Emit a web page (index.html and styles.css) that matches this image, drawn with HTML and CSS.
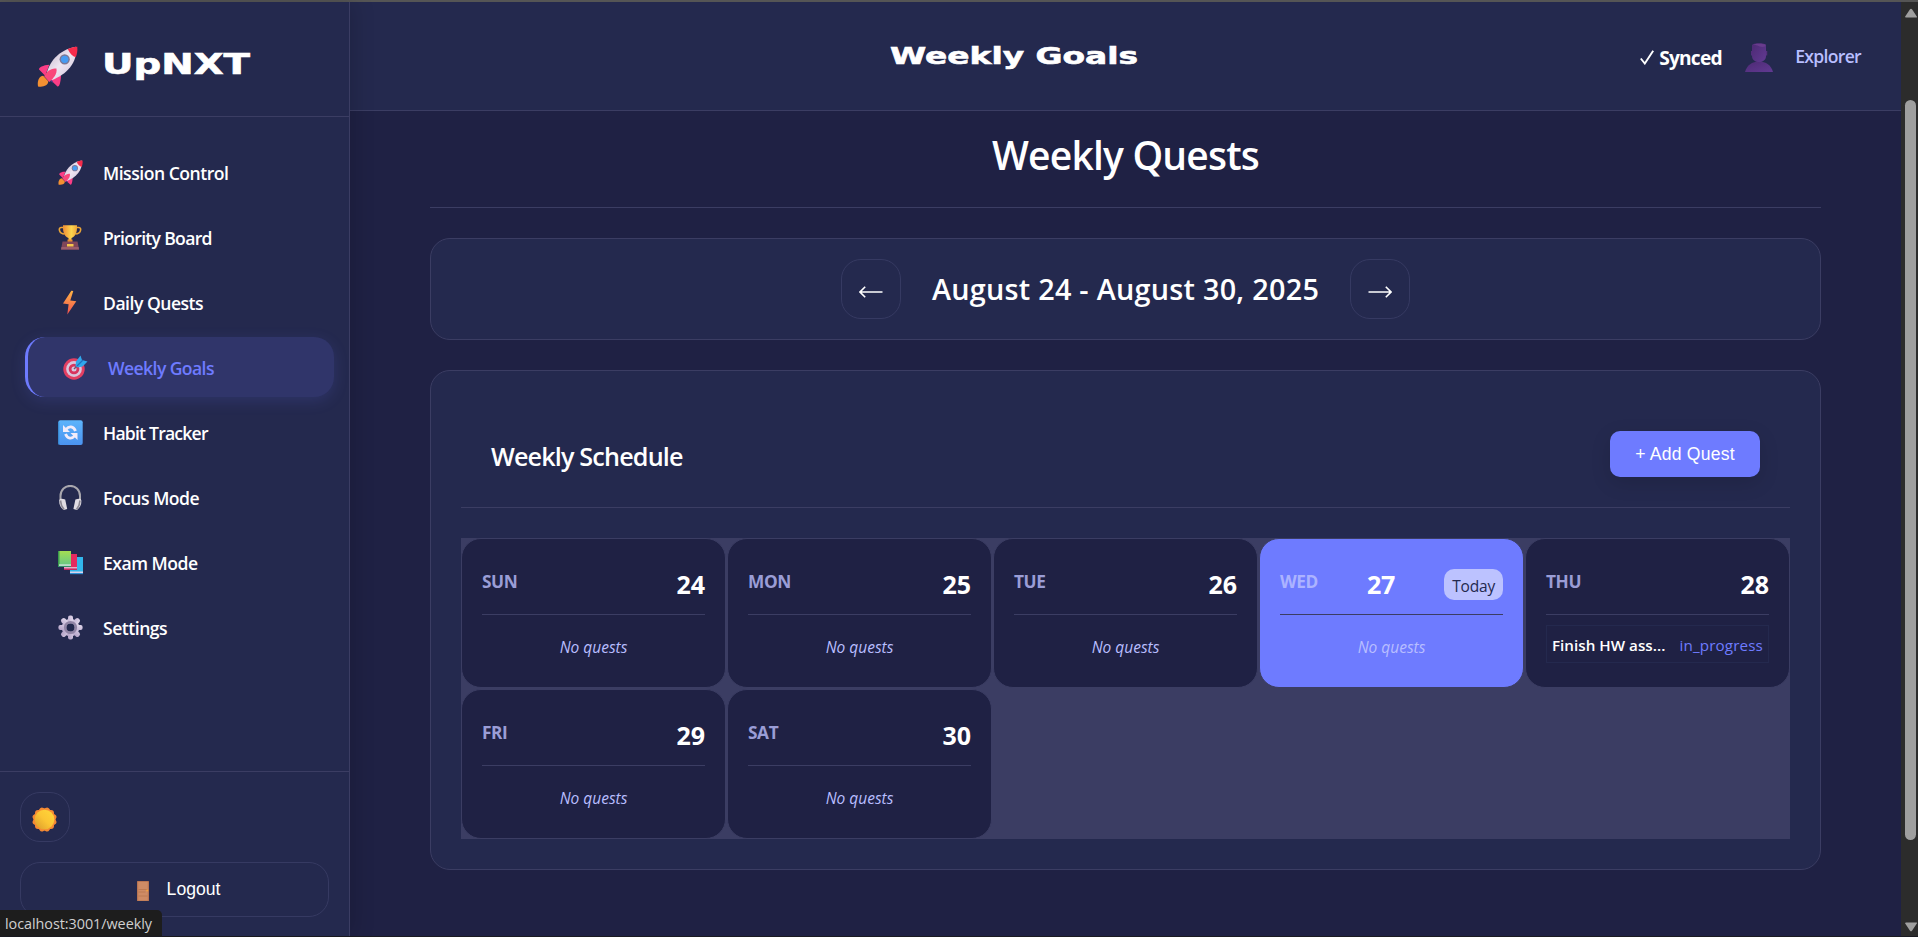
FILE: index.html
```html
<!DOCTYPE html>
<html lang="en">
<head>
<meta charset="utf-8">
<title>UpNXT</title>
<link rel="stylesheet" href="styles.css">
</head>
<body>
<svg class="defs" width="0" height="0" aria-hidden="true">
  <defs>
    <linearGradient id="hull" x1="0" y1="0" x2="1" y2="1"><stop offset="0" stop-color="#bcaec4"/><stop offset=".5" stop-color="#eee6f2"/><stop offset="1" stop-color="#cfc2d8"/></linearGradient>
    <linearGradient id="gold" x1="0" y1="0" x2="1" y2="0"><stop offset="0" stop-color="#f08c35"/><stop offset=".6" stop-color="#fcd64e"/><stop offset="1" stop-color="#f0a63a"/></linearGradient>
    <linearGradient id="bolt" x1="0" y1="0" x2="0" y2="1"><stop offset="0" stop-color="#ffb545"/><stop offset="1" stop-color="#f2504f"/></linearGradient>
    <linearGradient id="blue" x1="0" y1="0" x2="0" y2="1"><stop offset="0" stop-color="#5db4fb"/><stop offset="1" stop-color="#4b93f0"/></linearGradient>
    <linearGradient id="green" x1="0" y1="0" x2="0" y2="1"><stop offset="0" stop-color="#a5dd52"/><stop offset="1" stop-color="#5fc58a"/></linearGradient>
    <linearGradient id="steel" x1="1" y1="0" x2="0" y2="1"><stop offset="0" stop-color="#e2d8ec"/><stop offset="1" stop-color="#b3a1c6"/></linearGradient>
    <linearGradient id="sunface" x1="1" y1="0" x2="0" y2="1"><stop offset="0" stop-color="#ffd83b"/><stop offset=".5" stop-color="#fbc534"/><stop offset="1" stop-color="#d99a2c"/></linearGradient>
    <linearGradient id="bust" x1="0" y1="0" x2="1" y2="1"><stop offset="0" stop-color="#4d2a74"/><stop offset="1" stop-color="#613a92"/></linearGradient>
    <symbol id="rocket" viewBox="0 0 40 40">
      <path d="M1 39.500C0 34 2 29.500 6 29l5 5.500c0 4-5 6-10 5z" fill="#f39032"/>
      <path d="M8 29l-6-6c-.6-2 4-4.500 10-4.800zM13 33l7 6.500c2 .5 3-4 3.500-11z" fill="#fb3d86"/>
      <path d="M9 30l3 4 4 2-4-8z" fill="#4a3c8c"/>
      <path d="M9 29C11 17 20 4 38 .8 40 16 29 28 14 33.500z" fill="url(#hull)"/>
      <path d="M30 3C33 1.500 36 .5 39.300.7c.4 4-.3 7.300-1.500 10.300-3-1-6-3.500-7.800-8z" fill="#f62b4b"/>
      <path d="M7 29.500C9 25 14 21 19 22c1 5-3 10-7 13z" fill="#f9487b"/>
      <circle cx="27" cy="13" r="5" fill="#7c7896"/><circle cx="27" cy="13" r="3.600" fill="#479bf2"/>
    </symbol>
    <symbol id="trophy" viewBox="0.500 0 25 25">
      <path d="M6 2.500H3.500C.5 2.500 1.500 9 7 9M19 2.500h2.500c3 0 2 6.500-3.500 6.500" fill="none" stroke="#e9a437" stroke-width="1.600"/>
      <path d="M5.500.3h14C20 9 17 12 14 13v3.500h-3V13C8 12 5 9 5.500.3z" fill="url(#gold)"/>
      <path d="M10 14.500h5v2.500h-5z" fill="#e98c32"/>
      <path d="M5 16.500h15l1.500 8h-18z" fill="#804659"/><path d="M4 22h17.100l.4 2.500h-18z" fill="#9b5d6c"/>
      <rect x="9.500" y="19" width="6.500" height="2.500" fill="#f5c64d"/>
    </symbol>
    <symbol id="zap" viewBox="0.700 0 25 25"><path d="M14 .7L5.700 13.500l5.600.8L10 24.500l9-13.300-6-.6L16 1z" fill="url(#bolt)"/></symbol>
    <symbol id="target" viewBox="0 0 25 25">
      <circle cx="11" cy="14" r="10.700" fill="#e33f62"/><circle cx="11" cy="14" r="7.900" fill="#d8c5dc"/><circle cx="11" cy="14" r="5.300" fill="#d8345e"/><circle cx="11" cy="14" r="2.500" fill="#d6c9df"/>
      <path d="M11 14l3-3" stroke="#6d5278" stroke-width="1.500"/>
      <path d="M12.500 11L13 6.500 17.500.5l1.500 4.500 5.500 1.500-5 5-4.500 1z" fill="#2fa8ec"/><path d="M14 11l6-6" stroke="#2370bd" stroke-width="1.200"/>
    </symbol>
    <symbol id="cycle" viewBox="0 0 25 25">
      <rect x=".3" y=".3" width="24.400" height="24.700" rx="2" fill="url(#blue)"/><path d="M.8 2v22.500" stroke="#358fd6" stroke-width="1"/>
      <path d="M8 9.500C11 5.700 15.500 6 17.500 11M17 15.500c-3 3.800-7.500 3.500-9.500-1.500" fill="none" stroke="#f2ecfa" stroke-width="2.800"/>
      <path d="M5 5v7h7zM19.500 20v-7h-7z" fill="#f2ecfa"/>
    </symbol>
    <symbol id="phones" viewBox="0 0 25 25">
      <path d="M2.500 16V11C2.500-2.500 22-2.500 22 11v5" fill="none" stroke="#a9a7ae" stroke-width="2"/>
      <path d="M1.200 16c0-3 3-2.500 6-1.500l2 9.500-3.500 1C3 23 1 20 1.200 16zM23.400 16c0-3-3-2.500-6-1.500l-2 9.500 3.500 1c2.700-2 4.700-5 4.500-9z" fill="#e0dce3"/>
      <path d="M2.500 15.500l1 5 2.500 4M22 15.500l-1 5-2.500 4" stroke="#8b8792" stroke-width="1.600" fill="none"/>
    </symbol>
    <symbol id="books" viewBox="0 0 25 25">
      <path d="M12 7h13v17H12z" fill="#32b7ec"/><path d="M12 21.500h13v1.700H12z" fill="#d8d3ee"/><path d="M12 23.200h13v1H12z" fill="#2685d0"/>
      <path d="M6 4h13v16H6z" fill="#e52a5f"/><path d="M6 17.200h13v1.400H6z" fill="#e6cfe2"/><path d="M6 18.600h13v1.200H6z" fill="#bd2a65"/>
      <path d="M0 1h13v16H0z" fill="url(#green)"/><path d="M0 1h1.500v15H0z" fill="#3b9b4d"/><path d="M1 14.400h12v1.500H1z" fill="#d3e7dd"/><path d="M0 15.900h13v1.100H0z" fill="#348f69"/>
    </symbol>
    <symbol id="gear" viewBox="0 0 25 25">
      <g fill="url(#steel)"><circle cx="12.500" cy="12.500" r="8.800"/>
      <rect x="10" y=".4" width="5" height="24.200" rx="2"/><rect x=".4" y="10" width="24.200" height="5" rx="2"/>
      <rect x="10" y=".4" width="5" height="24.200" rx="2" transform="rotate(45 12.500 12.500)"/><rect x="10" y=".4" width="5" height="24.200" rx="2" transform="rotate(-45 12.500 12.500)"/></g>
      <circle cx="12.500" cy="12.500" r="5.400" fill="none" stroke="#9184a5" stroke-width="2.400"/><circle cx="12.500" cy="12.500" r="4" fill="#24294e"/>
    </symbol>
    <symbol id="sun" viewBox="0 0 25 25">
      <g fill="#f58a33"><rect x="3" y="3" width="19" height="19" rx="3"/><rect x="3" y="3" width="19" height="19" rx="3" transform="rotate(30 12.500 12.500)"/><rect x="3" y="3" width="19" height="19" rx="3" transform="rotate(60 12.500 12.500)"/></g>
      <circle cx="12.500" cy="12.500" r="9.800" fill="url(#sunface)"/>
    </symbol>
    <symbol id="door" viewBox="0 0 12 20">
      <rect width="12" height="20" rx=".6" fill="#b87452"/><rect x="1.200" y="1" width="9.600" height="18.500" fill="#ce8b65"/>
      <path d="M1.500 8.500h9M1.500 11h7M1.500 15h9" stroke="#b9764f" stroke-width=".8"/><circle cx="10.200" cy="9.600" r="1" fill="#f5a23a"/>
    </symbol>
    <symbol id="person" viewBox="0 0 28 29">
      <path d="M0 29C2 22 7 18.500 14 18.500S26 22 28 29z" fill="url(#bust)"/>
      <path d="M7 2C8-.3 20-.3 21 2v11c0 8-14 8-14 0z" fill="url(#bust)"/>
      <path d="M6.700 8v4.500M21.600 8v4.500" stroke="#55307e" stroke-width="1.300"/><path d="M8 1.500c3-1 9-1 12.500 0l-.5 2c-3 1-6 0-7.500-1z" fill="#693c8d"/>
    </symbol>
  </defs>
</svg>

<div class="app">
  <aside class="sidebar">
    <div class="brand">
      <svg class="brand-icon"><use href="#rocket"/></svg>
      <svg class="brand-name" viewBox="0 0 160 44"><text x="2" y="30" textLength="148" lengthAdjust="spacingAndGlyphs">UpNXT</text></svg>
    </div>
    <nav class="menu">
      <a class="item"><svg class="icon"><use href="#rocket"/></svg><span>Mission Control</span></a>
      <a class="item"><svg class="icon"><use href="#trophy"/></svg><span class="snug">Priority Board</span></a>
      <a class="item"><svg class="icon"><use href="#zap"/></svg><span>Daily Quests</span></a>
      <a class="item active"><svg class="icon"><use href="#target"/></svg><span>Weekly Goals</span></a>
      <a class="item"><svg class="icon"><use href="#cycle"/></svg><span class="tight">Habit Tracker</span></a>
      <a class="item"><svg class="icon"><use href="#phones"/></svg><span>Focus Mode</span></a>
      <a class="item"><svg class="icon"><use href="#books"/></svg><span>Exam Mode</span></a>
      <a class="item"><svg class="icon"><use href="#gear"/></svg><span>Settings</span></a>
    </nav>
    <div class="side-foot">
      <button class="theme"><svg class="icon"><use href="#sun"/></svg></button>
      <button class="logout"><svg class="door"><use href="#door"/></svg><span>Logout</span></button>
    </div>
  </aside>

  <div class="main">
    <header class="topbar">
      <svg class="page-name" viewBox="0 0 260 40"><text x="6" y="26" textLength="248" lengthAdjust="spacingAndGlyphs">Weekly Goals</text></svg>
      <div class="user">
        <svg class="check" viewBox="0 0 14 15"><path d="M.8 8.500l4 5L13.200.8" fill="none" stroke="#fff" stroke-width="1.900"/></svg>
        <span class="synced">Synced</span>
        <svg class="avatar"><use href="#person"/></svg>
        <span class="name">Explorer</span>
      </div>
    </header>
    <main class="content">
      <h1>Weekly Quests</h1>
      <section class="week-nav">
        <button class="arrow"><svg viewBox="0 0 24 12"><path d="M23.500 6H1M6.200.8L1 6l5.200 5.200"/></svg></button>
        <h2>August 24 - August 30, 2025</h2>
        <button class="arrow"><svg viewBox="0 0 24 12"><path d="M.5 6H23M17.800.8L23 6l-5.200 5.200"/></svg></button>
      </section>
      <section class="schedule">
        <div class="sched-head"><h3>Weekly Schedule</h3><button class="add">+ Add Quest</button></div>
        <div class="grid">
          <article class="day"><div class="day-head"><span class="dow">SUN</span><b>24</b></div><p>No quests</p></article>
          <article class="day"><div class="day-head"><span class="dow">MON</span><b>25</b></div><p>No quests</p></article>
          <article class="day"><div class="day-head"><span class="dow">TUE</span><b>26</b></div><p>No quests</p></article>
          <article class="day today"><div class="day-head"><span class="dow">WED</span><b>27</b><span class="badge">Today</span></div><p>No quests</p></article>
          <article class="day"><div class="day-head"><span class="dow">THU</span><b>28</b></div><div class="task"><span class="task-name">Finish HW ass...</span><span class="status">in_progress</span></div></article>
          <article class="day"><div class="day-head"><span class="dow">FRI</span><b>29</b></div><p>No quests</p></article>
          <article class="day"><div class="day-head"><span class="dow">SAT</span><b>30</b></div><p>No quests</p></article>
        </div>
      </section>
    </main>
  </div>

  <div class="scrollbar">
    <svg class="cap" viewBox="0 0 12 10"><path d="M1 9.500h10.500q1 0 .3-1L7 1.200q-1-1-2 0L.2 8.500q-.6 1 .8 1z"/></svg>
    <div class="thumb"></div>
    <svg class="cap" viewBox="0 0 12 10"><path d="M1 .5h10.500q1 0 .3 1L7 8.800q-1 1-2 0L.2 1.500q-.6-1 .8-1z"/></svg>
  </div>
</div>
<div class="link-status">localhost:3001/weekly</div>
</body>
</html>
```

FILE: styles.css
```css
* { box-sizing: border-box; }
body {
  margin: 0;
  width: 1918px;
  height: 937px;
  overflow: hidden;
  background: #1f2144;
  color: #fff;
  font-family: "Open Sans", "Noto Sans", sans-serif;
}
.defs { position: absolute; }
h1, h2, h3, p { margin: 0; font-weight: 600; }
button { padding: 0; margin: 0; background: none; color: #fff; font-family: "Liberation Sans", Arial, sans-serif; }
.app { display: flex; height: 937px; border-top: 2px solid #555; border-bottom: 1px solid #1b1b22; }

.sidebar {
  display: flex;
  flex-direction: column;
  flex: none;
  width: 350px;
  background: #24294e;
  border-right: 1px solid #3b3d63;
  box-shadow: 4px 0 20px rgba(0, 0, 0, .15);
  z-index: 1;
}
.brand { display: flex; align-items: center; gap: 22px; height: 115px; padding: 14px 0 0 37px; border-bottom: 1px solid #3b3d63; }
.brand-icon { width: 41px; height: 41px; }
.brand-name { width: 160px; height: 44px; }
.brand-name text, .page-name text { fill: #fff; stroke: #fff; stroke-width: .6; font-family: "DejaVu Sans", sans-serif; font-weight: 700; }
.brand-name text { font-size: 28px; }
.menu { display: flex; flex-direction: column; gap: 5px; padding: 25px 15px 0 25px; flex: 1; }
.item {
  display: flex;
  align-items: center;
  gap: 20px;
  height: 60px;
  padding: 1px 0 0 33px;
  border-radius: 20px;
  font-size: 17.600px;
  font-weight: 600;
  letter-spacing: -.5px;
  white-space: nowrap;
}
.item .snug { letter-spacing: -.7px; }
.item .tight { letter-spacing: -.8px; }
.icon { width: 25px; height: 25px; flex: none; }
.item.active {
  background: #30356a;
  color: #6e7bff;
  border-left: 3px solid #6e7bff;
  padding-left: 35px;
  letter-spacing: -.6px;
  box-shadow: 0 4px 15px rgba(110, 123, 255, .15);
}
.side-foot { display: flex; flex-direction: column; gap: 20px; height: 165px; padding: 20px 20px 0; border-top: 1px solid #3b3d63; }
.theme { display: flex; align-items: center; justify-content: center; width: 50px; height: 50px; padding: 4px 1px 0 0; border: 1px solid #363a62; border-radius: 20px; }
.logout { display: flex; align-items: center; justify-content: center; gap: 18px; height: 55px; border: 1px solid #363a62; border-radius: 20px; font-size: 17.600px; padding-left: 8px; }
.door { width: 12px; height: 20px; position: relative; top: 1px; }

.main { flex: 1; display: flex; flex-direction: column; min-width: 0; }
.topbar { display: flex; justify-content: space-between; height: 109px; padding: 0 40px 0 534px; background: #24294e; border-bottom: 1px solid #3b3d63; }
.page-name { width: 260px; height: 40px; margin-top: 36px; }
.page-name text { font-size: 23px; }
.user { display: flex; align-items: center; height: 110px; }
.check { width: 14px; height: 15px; margin-right: 5px; }
.synced { font-size: 19.200px; font-weight: 700; letter-spacing: -.8px; width: 65px; white-space: nowrap; }
.avatar { width: 28px; height: 29px; margin: 0 22px 0 21px; }
.name { font-size: 17.600px; font-weight: 600; color: #b8beff; letter-spacing: -.7px; position: relative; top: -1px; }

.content { padding: 0 80px; }
h1 { height: 97px; padding-top: 17px; border-bottom: 1px solid #3b3d63; font-size: 39px; line-height: 54px; letter-spacing: -.8px; text-align: center; }
.week-nav { display: flex; align-items: center; justify-content: center; gap: 30px; height: 102px; margin-top: 30px; background: #24294e; border: 1px solid #3b3d63; border-radius: 20px; }
h2 { width: 389px; padding-bottom: 2px; font-size: 28.800px; text-align: center; white-space: nowrap; letter-spacing: .26px; }
.arrow { display: flex; align-items: center; justify-content: center; width: 60px; height: 60px; padding-top: 5px; border: 1px solid #363a62; border-radius: 20px; }
.arrow svg { width: 24px; height: 12px; fill: none; stroke: #fff; stroke-width: 1.600; }
.schedule { height: 500px; margin-top: 30px; padding: 30px; background: #24294e; border: 1px solid #3b3d63; border-radius: 20px; }
.sched-head { display: flex; justify-content: space-between; align-items: flex-start; height: 107px; padding: 30px 30px 0; border-bottom: 1px solid #3b3d63; }
h3 { font-size: 25.200px; line-height: 50px; letter-spacing: -.85px; }
.add { width: 150px; height: 46px; background: #6e7bff; border: 0; border-radius: 10px; font-size: 17.600px; letter-spacing: .2px; box-shadow: 0 6px 20px rgba(0, 0, 0, .13); }
.grid { display: grid; grid-template-columns: repeat(5, 265px); grid-auto-rows: 150px; gap: 1px; margin-top: 30px; background: #3b3d63; }
.day { padding: 20px; background: #1f2144; border: 1px solid #3b3d63; border-radius: 20px; }
.day-head { display: flex; justify-content: space-between; align-items: center; height: 56px; padding-bottom: 4px; border-bottom: 1px solid #3b3d63; margin-bottom: 10px; }
.dow { font-size: 17.300px; font-weight: 700; color: #9a9dd6; letter-spacing: -.4px; position: relative; top: -3px; }
.day b { font-size: 25px; letter-spacing: -.1px; position: relative; top: -1px; }
.day p { font-size: 15.500px; font-style: italic; font-weight: 400; color: #b8beff; text-align: center; line-height: 44px; }
.today { background: #6e7bff; }
.today .dow { color: #acb3ff; }
.badge { height: 31px; line-height: 34px; padding: 0 8px; background: #bcc2ff; border-radius: 10px; color: #24294e; font-size: 15.500px; font-weight: 500; letter-spacing: -.2px; }
.task { display: flex; justify-content: space-between; align-items: center; height: 38px; margin-top: 10px; padding: 1px 5px 0; border: 1px solid #24294e; font-size: 15.200px; white-space: nowrap; }
.task-name { font-weight: 600; letter-spacing: .02px; }
.status { color: #6e7bff; letter-spacing: .15px; font-weight: 500; }

.scrollbar { display: flex; flex-direction: column; align-items: center; width: 17px; background: #2c2c2c; padding: 6px 0 4px 2px; }
.cap { width: 12px; height: 10px; fill: #9f9f9f; flex: none; }
.thumb { width: 11px; height: 740px; margin: 82px 0 auto; background: #9f9f9f; border-radius: 6px; }
.link-status { position: absolute; z-index: 2; left: 0; top: 910px; width: 162px; height: 26px; padding-left: 5px; background: #1d1d1d; color: #d0d0d0; border-top-right-radius: 5px; font-size: 14.400px; line-height: 27px; letter-spacing: -.05px; }
```
